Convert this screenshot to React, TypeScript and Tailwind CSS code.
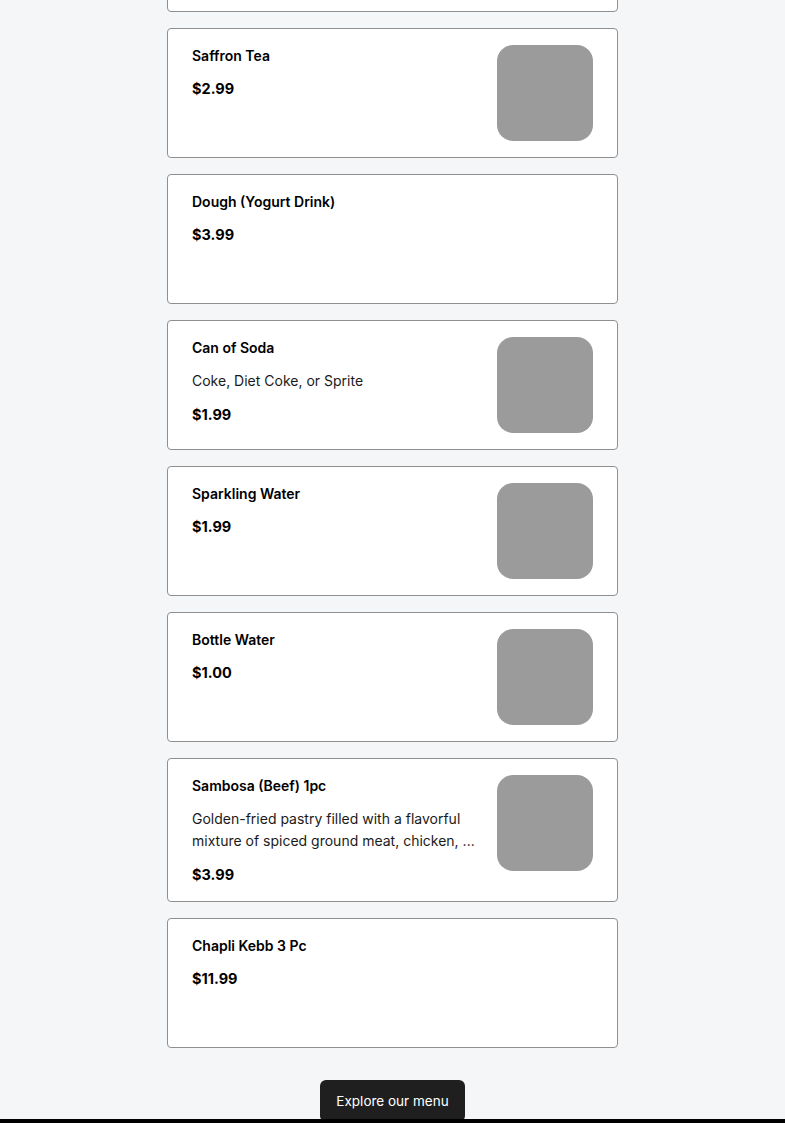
import React from "react";

type Item = { name: string; desc?: string[]; price: string; img: boolean };

const items: Item[] = [
  { name: "Saffron Tea", price: "$2.99", img: true },
  { name: "Dough (Yogurt Drink)", price: "$3.99", img: false },
  { name: "Can of Soda", desc: ["Coke, Diet Coke, or Sprite"], price: "$1.99", img: true },
  { name: "Sparkling Water", price: "$1.99", img: true },
  { name: "Bottle Water", price: "$1.00", img: true },
  {
    name: "Sambosa (Beef) 1pc",
    desc: ["Golden-fried pastry filled with a flavorful", "mixture of spiced ground meat, chicken, ..."],
    price: "$3.99",
    img: true,
  },
  { name: "Chapli Kebb 3 Pc", price: "$11.99", img: false },
];

function Card({ item }: { item: Item }) {
  return (
    <div className="flex min-h-[130px] rounded-[4px] border border-[#8f8f8f] bg-white px-6 py-4">
      <div className="flex min-w-0 flex-1 flex-col">
        <div className="text-[14px] font-semibold leading-[22px] text-black">{item.name}</div>
        {item.desc && (
          <div className="mt-[11px] flex flex-col text-[14px] leading-[22px] text-[#1a1a1a]">
            {item.desc.map((l) => (
              <span key={l} className="whitespace-nowrap">
                {l}
              </span>
            ))}
          </div>
        )}
        <div
          className={`${item.desc ? "mt-[13px]" : "mt-[12px]"} text-[14.5px] font-bold leading-[20px] text-black`}
        >
          {item.price}
        </div>
      </div>
      {item.img && <div className="ml-4 h-[96px] w-[96px] shrink-0 rounded-[16px] bg-[#9b9b9b]" />}
    </div>
  );
}

export default function App() {
  return (
    <div
      className="min-h-[1123px] bg-[#f5f6f7]"
      style={{ fontFamily: "Inter, 'Noto Sans', sans-serif" }}
    >
      <div className="mx-auto flex w-[451px] flex-col gap-4 overflow-hidden pb-8">
        <div className="-mt-[118px] h-[130px] rounded-[4px] border border-[#8f8f8f] bg-white" />
        {items.map((it) => (
          <Card key={it.name} item={it} />
        ))}
      </div>
      <div className="flex justify-center">
        <button className="h-[42px] rounded-[6px] bg-[#1f1f1f] px-4 text-[13.5px] leading-[40px] text-white">
          Explore our menu
        </button>
      </div>
      <div className="fixed bottom-0 left-0 h-[4px] w-full bg-black" />
    </div>
  );
}
